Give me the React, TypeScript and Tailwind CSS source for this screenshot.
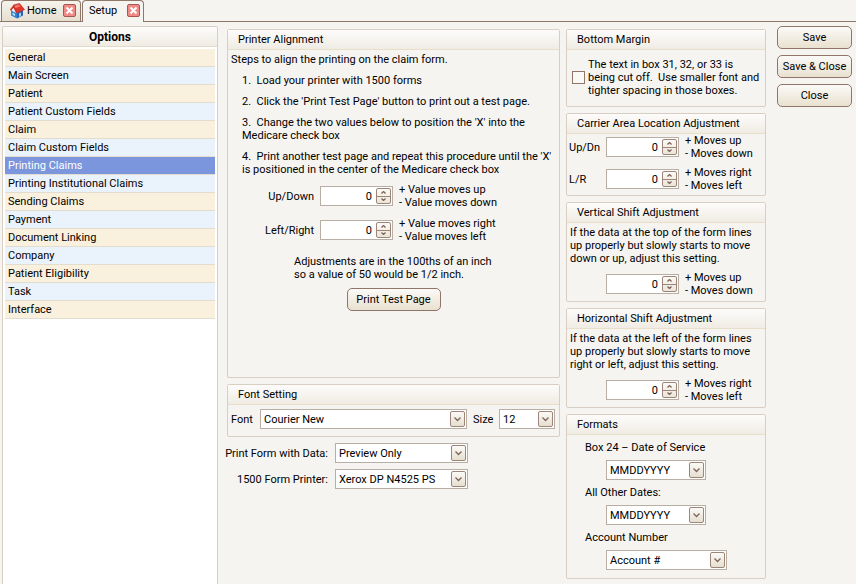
import React, { useState } from 'react'

interface PanelProps {
    title: string;
    className?: string;
    children: React.ReactNode;
}

interface SpinnerProps {
    id: string;
    label: string;
}

interface DropdownProps {
    id: string;
    value: string;
    className: string;
    label?: string;
}

const options = [
    'General',
    'Main Screen',
    'Patient',
    'Patient Custom Fields',
    'Claim',
    'Claim Custom Fields',
    'Printing Claims',
    'Printing Institutional Claims',
    'Sending Claims',
    'Payment',
    'Document Linking',
    'Company',
    'Patient Eligibility',
    'Task',
    'Interface',
]

const HomeIcon = () => (
    <svg width="16" height="16" viewBox="0 0 16 16" aria-hidden="true">
        <path d="M2 7 L8 10 V15.500 L2 12.500 Z" fill="#2f86d6" />
        <path d="M8 10 L14 7 V12.500 L8 15.500 Z" fill="#2a62b8" />
        <path d="M3.500 9.500 L6 11 V13 L3.500 11.700 Z" fill="#bfe2fa" />
        <path d="M10 10.500 L12 9.500 V13 L10 14 Z" fill="#9fd0f5" />
        <path d="M1 6.500 L4.500 2 L8 9.500 L7 10.500 L4.500 5 L2 8 Z" fill="#c8322a" />
        <path d="M4.500 5 L7 10 L2.500 7.600 Z" fill="#f3e4e4" />
        <path d="M4.500 2 L10.500 0.500 L15.500 6.500 L8 10 Z" fill="#e0352b" stroke="#b0201a" strokeWidth="0.600" />
        <path d="M5.500 2.800 L10 1.600 L11.500 3.500 L6.500 5 Z" fill="#f27a69" />
    </svg>
)

const CloseTab = ({ name }: { name: string }) => (
    <button type="button" aria-label={`Close ${name}`} className="flex h-[13px] w-[13px] items-center justify-center rounded-[2px] border border-[#a5584f] bg-[#f08a86]">
        <svg width="9" height="9" viewBox="0 0 9 9" aria-hidden="true">
            <path d="M1.500 1.500 L7.500 7.500 M7.500 1.500 L1.500 7.500" stroke="#fff" strokeWidth="2" />
        </svg>
    </button>
)

const Panel: React.FC<PanelProps> = ({ title, className, children }) => {
    return (
        <section className={`rounded-[2px] border border-[#d8cfc2] ${className ?? ''}`}>
            <h2 className="h-5 border-b border-[#e8dfc8] bg-linear-to-b from-[#fdfcfb] to-[#f0ece4] pl-[10px] leading-5">{title}</h2>
            {children}
        </section>
    )
}

const Spinner: React.FC<SpinnerProps> = ({ id, label }) => {
    const [value, setValue] = useState(0)

    return (
        <div className="flex h-5 w-[73px] shrink-0 items-center border border-[#b9aea4] bg-white pr-px">
            <input
                id={id}
                type="text"
                inputMode="numeric"
                aria-label={label}
                className="w-0 flex-1 pr-1 text-right outline-none"
                value={value}
                onChange={(e) => setValue(Number(e.target.value) || 0)}
            />
            <div className="flex h-4 w-[15px] flex-col divide-y divide-[#9d8577] rounded-[2px] border border-[#9d8577] bg-linear-to-b from-[#fbfaf7] to-[#ebe5d8]">
                <button type="button" aria-label="Increase" className="flex flex-1 items-center justify-center" onClick={() => setValue(value + 1)}>
                    <svg width="5" height="3" viewBox="0 0 5 3" aria-hidden="true"><path d="M0.500 2.500 L2.500 0.500 L4.500 2.500" fill="none" stroke="#7d6459" strokeWidth="1.300" /></svg>
                </button>
                <button type="button" aria-label="Decrease" className="flex flex-1 items-center justify-center" onClick={() => setValue(value - 1)}>
                    <svg width="5" height="3" viewBox="0 0 5 3" aria-hidden="true"><path d="M0.500 0.500 L2.500 2.500 L4.500 0.500" fill="none" stroke="#7d6459" strokeWidth="1.300" /></svg>
                </button>
            </div>
        </div>
    )
}

const Dropdown: React.FC<DropdownProps> = ({ id, value, className, label }) => {
    return (
        <div className={`relative h-5 ${className}`}>
            <select id={id} aria-label={label} className="h-5 w-full appearance-none border border-[#b9aea4] bg-white pl-[3px] outline-none">
                <option>{value}</option>
            </select>
            <span className="pointer-events-none absolute top-[2px] right-[2px] flex h-4 w-[15px] items-center justify-center rounded-[2px] border border-[#9d8577] bg-linear-to-b from-[#fbfaf7] to-[#e6dfd0]">
                <svg width="7" height="5" viewBox="0 0 7 5" aria-hidden="true"><path d="M0.500 0.500 L3.500 3.500 L6.500 0.500" fill="none" stroke="#7d6459" strokeWidth="1.300" /></svg>
            </span>
        </div>
    )
}

const ActionButton = ({ children }: { children: React.ReactNode }) => (
    <button type="button" className="h-[23px] w-full rounded-[5px] border border-[#917569] bg-linear-to-b from-[#fbfaf8] to-[#e9e1d0] whitespace-nowrap">
        {children}
    </button>
)

const App = () => {
    const [selected, setSelected] = useState('Printing Claims')

    return (
        <div className="flex min-h-screen flex-col bg-[#f6f4f1] font-['Roboto','Liberation_Sans',sans-serif] text-[11px] leading-[13px] text-black">
            {/* Tabs */}
            <nav className="flex h-[22px] items-end border-b border-[#8f776a] pl-px">
                <div className="flex h-[21px] w-20 items-center justify-between rounded-t-[4px] border border-b-0 border-[#8f776a] bg-linear-to-b from-[#f6f3ec] to-[#e6dfd0] pr-1 pb-px pl-[7px]">
                    <a href="#home" className="flex items-center gap-[2px]">
                        <HomeIcon />
                        Home
                    </a>
                    <CloseTab name="Home" />
                </div>
                <div className="-mb-px ml-px flex h-[22px] w-[62px] items-center justify-between rounded-t-[4px] border border-b-0 border-[#8f776a] bg-[#f6f4f1] pr-[3px] pb-[2px] pl-[6px]">
                    <a href="#setup">Setup</a>
                    <CloseTab name="Setup" />
                </div>
            </nav>

            <div className="flex flex-1 pr-1 pl-[2px]">
                {/* Options list */}
                <aside className="mt-1 w-[216px] shrink-0 rounded-t-[2px] border border-b-0 border-[#d8cfc2] bg-white">
                    <h2 className="h-5 border-b border-[#e4dccb] bg-linear-to-b from-[#fdfcfb] to-[#f0ece4] text-center text-[12px] leading-5 font-bold">Options</h2>
                    <ul className="px-[2px] pt-[2px]">
                        {options.map((option) => (
                            <li key={option} className="group">
                                <button
                                    type="button"
                                    className={`block h-[18px] w-full border-b border-[#e3ddd0] pl-[3px] text-left
                                                ${selected == option ? 'bg-[#7b96dd] text-white' : 'group-odd:bg-[#f9f0de] group-even:bg-[#eaf3fb]'}`}
                                    onClick={() => setSelected(option)}
                                >
                                    {option}
                                </button>
                            </li>
                        ))}
                    </ul>
                </aside>

                {/* Printer and font */}
                <main className="mt-[7px] ml-[9px] min-w-[333px] flex-1">
                    <Panel title="Printer Alignment" className="min-h-[349px]">
                        <p className="pt-[3px] pl-[3px]">Steps to align the printing on the claim form.</p>
                        <ol className="mt-2 space-y-2 pl-[14px] whitespace-nowrap">
                            <li>1.&nbsp; Load your printer with 1500 forms</li>
                            <li>2.&nbsp; Click the 'Print Test Page' button to print out a test page.</li>
                            <li>3.&nbsp; Change the two values below to position the 'X' into the<br />Medicare check box</li>
                            <li>4.&nbsp; Print another test page and repeat this procedure until the 'X'<br />is positioned in the center of the Medicare check box</li>
                        </ol>
                        <div className="mt-[7px] flex items-center">
                            <label htmlFor="updown" className="w-[86px] text-right">Up/Down</label>
                            <div className="ml-[6px]"><Spinner id="updown" label="Up/Down" /></div>
                            <p className="ml-[6px]">+ Value moves up<br />- Value moves down</p>
                        </div>
                        <div className="mt-2 flex items-center">
                            <label htmlFor="leftright" className="w-[86px] text-right">Left/Right</label>
                            <div className="ml-[6px]"><Spinner id="leftright" label="Left/Right" /></div>
                            <p className="ml-[6px]">+ Value moves right<br />- Value moves left</p>
                        </div>
                        <p className="mt-3 pl-[66px]">Adjustments are in the 100ths of an inch<br />so a value of 50 would be 1/2 inch.</p>
                        <div className="mx-auto mt-[7px] w-[94px]">
                            <ActionButton>Print Test Page</ActionButton>
                        </div>
                    </Panel>

                    <Panel title="Font Setting" className="mt-[6px]">
                        <div className="flex items-center pt-1 pr-1 pb-[7px] pl-[3px]">
                            <label htmlFor="font" className="w-[29px]">Font</label>
                            <Dropdown id="font" value="Courier New" className="flex-1" />
                            <label htmlFor="size" className="ml-[6px] w-[26px]">Size</label>
                            <Dropdown id="size" value="12" className="w-14" />
                        </div>
                    </Panel>

                    <div className="mt-[6px] flex items-center">
                        <label htmlFor="preview" className="-ml-1 w-[105px] text-right whitespace-nowrap">Print Form with Data:</label>
                        <Dropdown id="preview" value="Preview Only" className="ml-[7px] w-[133px]" />
                    </div>
                    <div className="mt-[6px] flex items-center">
                        <label htmlFor="printer" className="-ml-1 w-[105px] text-right whitespace-nowrap">1500 Form Printer:</label>
                        <Dropdown id="printer" value="Xerox DP N4525 PS" className="ml-[7px] w-[133px]" />
                    </div>
                </main>

                {/* Adjustments */}
                <div className="mt-[7px] ml-[6px] flex w-[200px] shrink-0 flex-col gap-[6px]">
                    <Panel title="Bottom Margin">
                        <div className="flex items-center pt-2 pb-[9px] pl-[5px]">
                            <input id="cutoff" type="checkbox" className="h-[13px] w-[13px] shrink-0 appearance-none border border-[#917569] bg-[#faf9f6] checked:bg-[#917569]" />
                            <label htmlFor="cutoff" className="ml-[3px] whitespace-nowrap">The text in box 31, 32, or 33 is<br />being cut off.&nbsp; Use smaller font and<br />tighter spacing in those boxes.</label>
                        </div>
                    </Panel>

                    <Panel title="Carrier Area Location Adjustment">
                        <div className="flex items-center pl-[2px]">
                            <label htmlFor="updn" className="w-[37px]">Up/Dn</label>
                            <Spinner id="updn" label="Up/Dn" />
                            <p className="ml-[6px]">+ Moves up<br />- Moves down</p>
                        </div>
                        <div className="mt-[6px] flex items-center pb-[3px] pl-[2px]">
                            <label htmlFor="lr" className="w-[37px]">L/R</label>
                            <Spinner id="lr" label="L/R" />
                            <p className="ml-[6px]">+ Moves right<br />- Moves left</p>
                        </div>
                    </Panel>

                    <Panel title="Vertical Shift Adjustment">
                        <p className="pt-[3px] pl-[3px] whitespace-nowrap">If the data at the top of the form lines<br />up properly but slowly starts to move<br />down or up, adjust this setting.</p>
                        <div className="mt-[6px] flex items-center pb-1 pl-[39px]">
                            <Spinner id="vertical" label="Vertical Shift Adjustment" />
                            <p className="ml-[6px]">+ Moves up<br />- Moves down</p>
                        </div>
                    </Panel>

                    <Panel title="Horizontal Shift Adjustment">
                        <p className="pt-[3px] pl-[3px] whitespace-nowrap">If the data at the left of the form lines<br />up properly but slowly starts to move<br />right or left, adjust this setting.</p>
                        <div className="mt-[6px] flex items-center pb-1 pl-[39px]">
                            <Spinner id="horizontal" label="Horizontal Shift Adjustment" />
                            <p className="ml-[6px]">+ Moves right<br />- Moves left</p>
                        </div>
                    </Panel>

                    <Panel title="Formats">
                        <div className="space-y-[6px] pt-[6px] pb-2 pl-[18px]">
                            <div>
                                <label htmlFor="box24">Box 24 – Date of Service</label>
                                <Dropdown id="box24" value="MMDDYYYY" className="mt-[6px] ml-[21px] w-[100px]" />
                            </div>
                            <div>
                                <label htmlFor="dates">All Other Dates:</label>
                                <Dropdown id="dates" value="MMDDYYYY" className="mt-[6px] ml-[21px] w-[100px]" />
                            </div>
                            <div>
                                <label htmlFor="account">Account Number</label>
                                <Dropdown id="account" value="Account #" className="mt-[6px] ml-[21px] w-[121px]" />
                            </div>
                        </div>
                    </Panel>
                </div>

                {/* Actions */}
                <div className="mt-1 ml-[11px] flex w-[75px] shrink-0 flex-col gap-[6px]">
                    <ActionButton>Save</ActionButton>
                    <ActionButton>Save &amp; Close</ActionButton>
                    <ActionButton>Close</ActionButton>
                </div>
            </div>
        </div>
    )
}

export default App
